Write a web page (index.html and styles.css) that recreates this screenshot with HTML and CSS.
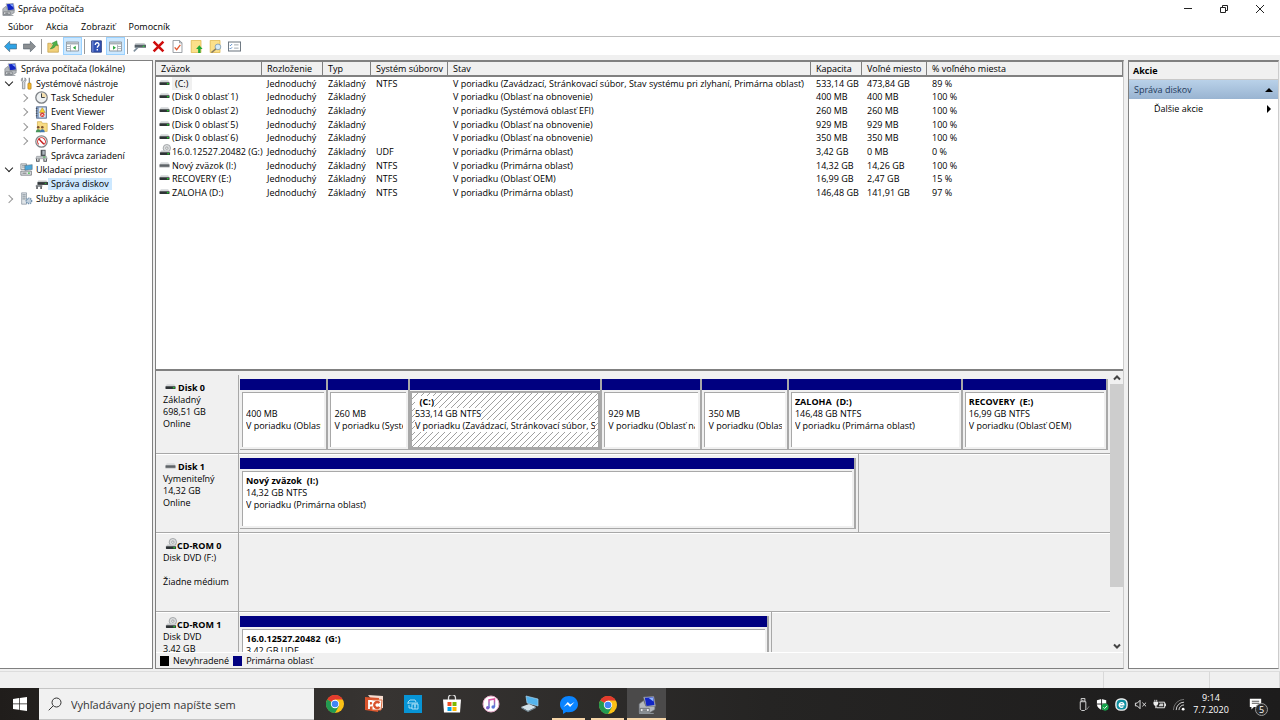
FILE: index.html
```html
<!DOCTYPE html>
<html lang="sk">

<head>
    <meta charset="UTF-8">
    <meta name="viewport" content="width=device-width, initial-scale=1.0">
    <title>Správa počítača</title>
    <link rel="stylesheet" href="styles.css">
</head>

<body>
    <!-- Shared icons -->
    <svg class="sprite" aria-hidden="true">
        <symbol id="computer" viewBox="0 0 16 16">
            <path d="M5 1l9-.5 1.500 8.500-8 1z" fill="#c9cdd6" stroke="#7d8290" stroke-width=".6" />
            <path d="M6 1.500l7.500-.5 1.200 7-7.200 1z" fill="#1226c4" />
            <path d="M9.500 1.700l3.700-.3.600 3.500z" fill="#8fb4ff" />
            <path d="M1 7l4-3 2 5h8v3l-5 3H1z" fill="#b4b8bc" stroke="#6a6e74" stroke-width=".6" />
            <path d="M2 11h8v3H2z" fill="#e6e8ea" stroke="#53585e" stroke-width=".7" />
            <path d="M4 12.500h4" stroke="#41464b" />
            <path d="M1 15.500h13" stroke="#8b9197" />
        </symbol>
        <symbol id="drive" viewBox="0 0 12 6">
            <path d="M2 0h8l1.500 2.500H.5z" fill="#d3d6d8" />
            <rect x=".5" y="2.200" width="11" height="3" rx=".5" fill="#2e3336" />
            <rect x="8.600" y="3" width="2" height="1.500" fill="#22c32c" />
        </symbol>
        <symbol id="drive-off" viewBox="0 0 12 6">
            <path d="M2 0h8l1.500 2.500H.5z" fill="#d9dbdd" />
            <rect x=".5" y="2.200" width="11" height="3" rx=".5" fill="#5f6468" />
            <path d="M.5 5.500h11" stroke="#c9cbcc" />
        </symbol>
        <symbol id="cdrom" viewBox="0 0 13 13">
            <circle cx="8.500" cy="4.500" r="4" fill="#dcdedf" stroke="#8f9395" stroke-width=".8" />
            <circle cx="8.500" cy="4.500" r="1.300" fill="#fff" stroke="#7d8183" stroke-width=".7" />
            <path d="M2.500 7h8l1.500 2H1z" fill="#c8cbcd" />
            <rect x="1" y="9" width="11" height="3" rx=".5" fill="#2e3336" />
            <rect x="9" y="9.800" width="2" height="1.500" fill="#22c32c" />
        </symbol>
        <symbol id="tools" viewBox="0 0 16 16">
            <path d="M3 1v3l1.500 1.200L6 4V1c2 1.500 2 4 0 5v8.500H3V6C1 5 1 2.500 3 1z" fill="#d6d9dc" stroke="#70767c" stroke-width=".8" />
            <path d="M11.500 1v7" stroke="#8a9096" stroke-width="1.600" />
            <rect x="9.700" y="7.500" width="4" height="7.500" rx="1" fill="#f2b62c" stroke="#a87310" stroke-width=".7" />
        </symbol>
        <symbol id="clock" viewBox="0 0 16 16">
            <circle cx="8" cy="8" r="7" fill="#eef1f2" stroke="#7d8185" stroke-width="1.600" />
            <path d="M8 8V2a6 6 0 0 1 6 6z" fill="#f3dfae" />
            <path d="M8 3v5h4" fill="none" stroke="#3b4045" stroke-width="1.200" />
        </symbol>
        <symbol id="events" viewBox="0 0 16 16">
            <rect x="2" y="1" width="12" height="14" fill="#8fa9cc" stroke="#4d6488" />
            <rect x="5" y="2" width="8" height="12" fill="#e6edf5" />
            <path d="M9 2l3.500 6h-7z" fill="#f7d22d" stroke="#a4851a" stroke-width=".6" />
            <circle cx="9" cy="10.800" r="2.800" fill="#d9362b" />
            <path d="M7.800 9.600l2.400 2.400m0-2.400L7.800 12" stroke="#fff" stroke-width=".9" />
            <path d="M1 3h2M1 6h2M1 9h2M1 12h2" stroke="#3d3d3d" />
        </symbol>
        <symbol id="shared" viewBox="0 0 16 16">
            <path d="M3 2h5l1 2h6v10H3z" fill="#f8dc83" stroke="#c79f35" stroke-width=".7" />
            <circle cx="4" cy="9" r="1.600" fill="#7c522f" />
            <circle cx="9" cy="9" r="1.600" fill="#7c522f" />
            <path d="M1 15c0-5 6-5 6 0z" fill="#49945b" />
            <path d="M6 15c0-5 6-5 6 0z" fill="#3f78ae" />
        </symbol>
        <symbol id="perf" viewBox="0 0 16 16">
            <circle cx="8" cy="8" r="7" fill="#fff" stroke="#7f8387" stroke-width="1.500" />
            <path d="M4.500 11.500a4.800 4.800 0 1 1 7 0" fill="none" stroke="#d23131" stroke-width="1.300" />
            <path d="M4.500 4.500l6.500 7" stroke="#c81f1f" stroke-width="1.800" />
        </symbol>
        <symbol id="devices" viewBox="0 0 16 16">
            <path d="M7 1h6v8H7z" fill="#4b5055" />
            <path d="M9 2h3v5H9z" fill="#aeb7bf" />
            <path d="M2 9h12l1 3H1z" fill="#c3c7ca" stroke="#7c8185" stroke-width=".6" />
            <path d="M2 12v3h3v-3m6 0v3h3v-3" fill="none" stroke="#4c5054" stroke-width="1.300" />
            <path d="M10 10h3" stroke="#2cb535" />
        </symbol>
        <symbol id="storage" viewBox="0 0 16 16">
            <path d="M1 1h7v7H1z" fill="#dde0e2" stroke="#70767a" stroke-width=".8" />
            <path d="M2.500 3h4M2.500 5h4" stroke="#8d9397" />
            <path d="M6 3l9-1v6l-9 1z" fill="#4ba6d9" stroke="#5b6c76" stroke-width=".7" />
            <path d="M1 10h13v5H1z" fill="#e0e2e4" stroke="#63686d" stroke-width=".9" />
            <path d="M3 12.500h5" stroke="#565b60" />
            <path d="M10 12.500h2" stroke="#21b42b" stroke-width="1.500" />
        </symbol>
        <symbol id="diskmgmt" viewBox="0 0 16 16">
            <path d="M4 3h10l1.500 2H3z" fill="#c4c8ca" />
            <path d="M3 5h13v3.500H3z" fill="#33383c" />
            <path d="M12 6h2v1.200h-2z" fill="#29c133" />
            <path d="M1 8.500h8V11H1z" fill="#8c9195" />
            <path d="M2.500 10.500v3m5-3v3" stroke="#44494d" stroke-width="1.800" />
        </symbol>
        <symbol id="services" viewBox="0 0 16 16">
            <path d="M2 1h6v14H2z" fill="#dfe4e8" stroke="#7c8894" stroke-width=".8" />
            <path d="M3 3.500h4M3 6h4M3 8.500h4" stroke="#6a7680" />
            <circle cx="11" cy="11" r="3.200" fill="#dce7f1" stroke="#7191ae" stroke-width="2" stroke-dasharray="1.500 .8" />
            <circle cx="11" cy="11" r="1.300" fill="#fff" stroke="#7191ae" stroke-width=".6" />
        </symbol>
        <symbol id="arrow" viewBox="0 0 16 16">
            <path d="M.5 8L7 1.500V5h8.500v6H7v3.500z" stroke="#4b5a66" stroke-width=".7" />
        </symbol>
        <symbol id="folder-up" viewBox="0 0 16 16">
            <path d="M1 4h4l1 2h8v9H1z" fill="#f0d07a" stroke="#c0983c" stroke-width=".8" />
            <path d="M4 11c2-2 3-4 4-6L6 4l6-3 1 6-2-1c-1 3-3 4-7 5z" fill="#4fb34a" stroke="#2c8030" stroke-width=".6" />
        </symbol>
        <symbol id="pane" viewBox="0 0 16 16">
            <path d="M.5 2.500h15v11H.5z" fill="#fff" stroke="#7a848c" />
            <path d="M1 3h14v2.500H1z" fill="#a9b2b9" />
        </symbol>
        <symbol id="chrome" viewBox="0 0 18 18">
            <circle cx="9" cy="9" r="9" fill="#fbc116" />
            <path d="M9 9L1.200 4.500A9 9 0 0 1 16.800 4.500H9z" fill="#e33b2e" />
            <path d="M9 9L1.200 4.500A9 9 0 0 0 9 18l4-7z" fill="#229a52" />
            <circle cx="9" cy="9" r="4.200" fill="#fff" />
            <circle cx="9" cy="9" r="3.300" fill="#4285f4" />
        </symbol>
    </svg>

    <header class="titlebar">
        <svg class="icon"><use href="#computer" /></svg>
        <h1>Správa počítača</h1>
        <div class="window-buttons">
            <button aria-label="Minimalizovať"><svg viewBox="0 0 10 10"><path d="M1 4.500h8" /></svg></button>
            <button aria-label="Obnoviť"><svg viewBox="0 0 10 10"><path d="M1.500 3.500h5v5h-5zM3.500 3.500v-2h5v5h-2" /></svg></button>
            <button aria-label="Zavrieť"><svg viewBox="0 0 10 10"><path d="M1 1l8 8M9 1L1 9" /></svg></button>
        </div>
    </header>

    <nav class="menubar">
        <button>Súbor</button>
        <button>Akcia</button>
        <button>Zobraziť</button>
        <button>Pomocník</button>
    </nav>

    <div class="toolbar">
        <button aria-label="Späť"><svg class="icon back"><use href="#arrow" /></svg></button>
        <button aria-label="Dopredu"><svg class="icon forward"><use href="#arrow" /></svg></button>
        <span class="sep"></span>
        <button aria-label="O úroveň vyššie"><svg class="icon"><use href="#folder-up" /></svg></button>
        <button class="on" aria-label="Strom konzoly"><svg class="icon" viewBox="0 0 16 16"><use href="#pane" /><path d="M5.500 6v8M1 8h4M1 10.500h4" stroke="#9aa4ab" /><path d="M12 7v5L8.500 9.500z" fill="#27a53a" /></svg></button>
        <span class="sep"></span>
        <button aria-label="Pomocník"><svg class="icon" viewBox="0 0 16 16"><path d="M2 1h12v14H2z" fill="#3252b4" stroke="#1f347b" /><path d="M3.500 1v14" stroke="#90a6e4" /><path d="M6.500 6c0-4 5-3 4.500 0-.2 1.500-2 1.500-2 3.500M9 11v2" fill="none" stroke="#fff" stroke-width="1.700" /></svg></button>
        <button class="on" aria-label="Panel akcií"><svg class="icon" viewBox="0 0 16 16"><use href="#pane" /><path d="M10.500 6v8M11 8h4M11 10.500h4" stroke="#9aa4ab" /><path d="M5 7v5l3.500-2.500z" fill="#27a53a" /></svg></button>
        <span class="sep"></span>
        <button aria-label="Disk"><svg class="icon" viewBox="0 0 16 16"><path d="M3 4h11l2 2H2z" fill="#b9bec2" /><path d="M2 6h14v3.500H2z" fill="#566068" /><path d="M12 7h2v1.500h-2z" fill="#2fd63a" /><path d="M1 14l5-5" stroke="#80909d" stroke-width="2" /></svg></button>
        <button aria-label="Odstrániť"><svg class="icon" viewBox="0 0 16 16"><path d="M2 2l12 12M14 2L2 14" stroke="#cf0e0e" stroke-width="3.200" /></svg></button>
        <button aria-label="Vlastnosti"><svg class="icon" viewBox="0 0 16 16"><path d="M2.500.5h8l3 3v12h-11z" fill="#fff" stroke="#81888e" /><path d="M10.500.5v3h3" fill="none" stroke="#81888e" /><path d="M4.500 9l2.500 3 4.500-6" fill="none" stroke="#e2562c" stroke-width="1.600" /></svg></button>
        <button aria-label="Otvoriť"><svg class="icon" viewBox="0 0 16 16"><path d="M1.500.5h12v15h-12z" fill="#fbe08a" stroke="#dfb94f" /><path d="M11.500 6.500l4 4.500h-2.500v5h-3v-5H7.500z" fill="#21a836" /></svg></button>
        <button aria-label="Hľadať"><svg class="icon" viewBox="0 0 16 16"><path d="M1.500.5h12v15h-12z" fill="#fbe08a" stroke="#dfb94f" /><circle cx="11" cy="8.500" r="3.500" fill="#d6ebf8" stroke="#7c99ae" /><path d="M8.500 11L3 15.500" stroke="#8d8060" stroke-width="2" /></svg></button>
        <button aria-label="Nastavenia"><svg class="icon" viewBox="0 0 16 16"><path d="M.5 2.500h15v11H.5z" fill="#fff" stroke="#68737d" stroke-width="1.300" /><path d="M2 6l1 1 2-2M2 10l1 1 2-2" fill="none" stroke="#3473bd" /><path d="M7.500 6H13M7.500 10H13" stroke="#8c969e" /></svg></button>
    </div>

    <main>
        <aside class="tree">
            <ul>
                <li><svg class="icon"><use href="#computer" /></svg><span>Správa počítača (lokálne)</span></li>
                <li class="level-1"><button class="open" aria-label="Zbaliť"></button><svg class="icon"><use href="#tools" /></svg><span>Systémové nástroje</span></li>
                <li class="level-2"><button aria-label="Rozbaliť"></button><svg class="icon"><use href="#clock" /></svg><span>Task Scheduler</span></li>
                <li class="level-2"><button aria-label="Rozbaliť"></button><svg class="icon"><use href="#events" /></svg><span>Event Viewer</span></li>
                <li class="level-2"><button aria-label="Rozbaliť"></button><svg class="icon"><use href="#shared" /></svg><span>Shared Folders</span></li>
                <li class="level-2"><button aria-label="Rozbaliť"></button><svg class="icon"><use href="#perf" /></svg><span>Performance</span></li>
                <li class="level-2 leaf"><svg class="icon"><use href="#devices" /></svg><span>Správca zariadení</span></li>
                <li class="level-1"><button class="open" aria-label="Zbaliť"></button><svg class="icon"><use href="#storage" /></svg><span>Ukladací priestor</span></li>
                <li class="level-2 leaf selected"><svg class="icon"><use href="#diskmgmt" /></svg><span>Správa diskov</span></li>
                <li class="level-1"><button aria-label="Rozbaliť"></button><svg class="icon"><use href="#services" /></svg><span>Služby a aplikácie</span></li>
            </ul>
        </aside>

        <section class="content">
            <div class="volumes">
                <table>
                    <colgroup>
                        <col class="c-volume">
                        <col class="c-layout">
                        <col class="c-type">
                        <col class="c-fs">
                        <col class="c-status">
                        <col class="c-capacity">
                        <col class="c-free">
                        <col>
                    </colgroup>
                    <thead>
                        <tr><th>Zväzok</th><th>Rozloženie</th><th>Typ</th><th>Systém súborov</th><th>Stav</th><th>Kapacita</th><th>Voľné miesto</th><th>% voľného miesta</th></tr>
                    </thead>
                    <tbody>
                        <tr><td><svg class="drive"><use href="#drive" /></svg><span class="focus">(C:)</span></td><td>Jednoduchý</td><td>Základný</td><td>NTFS</td><td>V poriadku (Zavádzací, Stránkovací súbor, Stav systému pri zlyhaní, Primárna oblasť)</td><td>533,14 GB</td><td>473,84 GB</td><td>89 %</td></tr>
                        <tr><td><svg class="drive"><use href="#drive" /></svg>(Disk 0 oblasť 1)</td><td>Jednoduchý</td><td>Základný</td><td></td><td>V poriadku (Oblasť na obnovenie)</td><td>400 MB</td><td>400 MB</td><td>100 %</td></tr>
                        <tr><td><svg class="drive"><use href="#drive" /></svg>(Disk 0 oblasť 2)</td><td>Jednoduchý</td><td>Základný</td><td></td><td>V poriadku (Systémová oblasť EFI)</td><td>260 MB</td><td>260 MB</td><td>100 %</td></tr>
                        <tr><td><svg class="drive"><use href="#drive" /></svg>(Disk 0 oblasť 5)</td><td>Jednoduchý</td><td>Základný</td><td></td><td>V poriadku (Oblasť na obnovenie)</td><td>929 MB</td><td>929 MB</td><td>100 %</td></tr>
                        <tr><td><svg class="drive"><use href="#drive" /></svg>(Disk 0 oblasť 6)</td><td>Jednoduchý</td><td>Základný</td><td></td><td>V poriadku (Oblasť na obnovenie)</td><td>350 MB</td><td>350 MB</td><td>100 %</td></tr>
                        <tr><td><svg class="drive cd"><use href="#cdrom" /></svg>16.0.12527.20482 (G:)</td><td>Jednoduchý</td><td>Základný</td><td>UDF</td><td>V poriadku (Primárna oblasť)</td><td>3,42 GB</td><td>0 MB</td><td>0 %</td></tr>
                        <tr><td><svg class="drive"><use href="#drive-off" /></svg>Nový zväzok (I:)</td><td>Jednoduchý</td><td>Základný</td><td>NTFS</td><td>V poriadku (Primárna oblasť)</td><td>14,32 GB</td><td>14,26 GB</td><td>100 %</td></tr>
                        <tr><td><svg class="drive"><use href="#drive" /></svg>RECOVERY (E:)</td><td>Jednoduchý</td><td>Základný</td><td>NTFS</td><td>V poriadku (Oblasť OEM)</td><td>16,99 GB</td><td>2,47 GB</td><td>15 %</td></tr>
                        <tr><td><svg class="drive"><use href="#drive" /></svg>ZALOHA (D:)</td><td>Jednoduchý</td><td>Základný</td><td>NTFS</td><td>V poriadku (Primárna oblasť)</td><td>146,48 GB</td><td>141,91 GB</td><td>97 %</td></tr>
                    </tbody>
                </table>
            </div>

            <div class="graph">
                <div class="disks">
                    <div class="disk">
                        <div class="disk-label">
                            <h2><svg class="drive"><use href="#drive" /></svg>Disk 0</h2>
                            <p>Základný</p>
                            <p>698,51 GB</p>
                            <p>Online</p>
                        </div>
                        <div class="partitions" style="flex-grow: 100">
                            <div class="part" style="flex-grow: 88"><div class="part-box"><p>&nbsp;</p><p>400 MB</p><p>V poriadku (Oblasť na obnovenie)</p></div></div>
                            <div class="part" style="flex-grow: 81"><div class="part-box"><p>&nbsp;</p><p>260 MB</p><p>V poriadku (Systémová oblasť EFI)</p></div></div>
                            <div class="part active" style="flex-grow: 194"><div class="part-box"><p><b>&nbsp; (C:)</b></p><p><span>533,14 GB NTFS</span></p><p><span>V poriadku (Zavádzací, Stránkovací súbor, Stav systému pri zlyhaní)</span></p></div></div>
                            <div class="part" style="flex-grow: 100"><div class="part-box"><p>&nbsp;</p><p>929 MB</p><p>V poriadku (Oblasť na obnovenie)</p></div></div>
                            <div class="part" style="flex-grow: 86"><div class="part-box"><p>&nbsp;</p><p>350 MB</p><p>V poriadku (Oblasť na obnovenie)</p></div></div>
                            <div class="part" style="flex-grow: 175"><div class="part-box"><p><b>ZALOHA&nbsp; (D:)</b></p><p>146,48 GB NTFS</p><p>V poriadku (Primárna oblasť)</p></div></div>
                            <div class="part" style="flex-grow: 146"><div class="part-box"><p><b>RECOVERY&nbsp; (E:)</b></p><p>16,99 GB NTFS</p><p>V poriadku (Oblasť OEM)</p></div></div>
                        </div>
                    </div>
                    <div class="disk">
                        <div class="disk-label">
                            <h2><svg class="drive"><use href="#drive-off" /></svg>Disk 1</h2>
                            <p>Vymeniteľný</p>
                            <p>14,32 GB</p>
                            <p>Online</p>
                        </div>
                        <div class="partitions single" style="flex-grow: 71">
                            <div class="part"><div class="part-box"><p><b>Nový zväzok&nbsp; (I:)</b></p><p>14,32 GB NTFS</p><p>V poriadku (Primárna oblasť)</p></div></div>
                        </div>
                        <div class="unused" style="flex-grow: 29"></div>
                    </div>
                    <div class="disk">
                        <div class="disk-label">
                            <h2><svg class="drive cd"><use href="#cdrom" /></svg>CD-ROM 0</h2>
                            <p>Disk DVD (F:)</p>
                            <p>&nbsp;</p>
                            <p>Žiadne médium</p>
                        </div>
                    </div>
                    <div class="disk">
                        <div class="disk-label">
                            <h2><svg class="drive cd"><use href="#cdrom" /></svg>CD-ROM 1</h2>
                            <p>Disk DVD</p>
                            <p>3,42 GB</p>
                        </div>
                        <div class="partitions single" style="flex-grow: 61">
                            <div class="part"><div class="part-box"><p><b>16.0.12527.20482&nbsp; (G:)</b></p><p>3,42 GB UDF</p></div></div>
                        </div>
                        <div class="unused" style="flex-grow: 39"></div>
                    </div>
                </div>
                <div class="scrollbar">
                    <button aria-label="Nahor"><svg viewBox="0 0 8 8"><path d="M1 5.500l3-3 3 3" /></svg></button>
                    <div class="thumb"></div>
                    <button aria-label="Nadol"><svg viewBox="0 0 8 8"><path d="M1 2.500l3 3 3-3" /></svg></button>
                </div>
            </div>

            <div class="legend">
                <i class="swatch black"></i>
                <span>Nevyhradené</span>
                <i class="swatch navy"></i>
                <span>Primárna oblasť</span>
            </div>
        </section>

        <aside class="actions">
            <h2>Akcie</h2>
            <button class="group">Správa diskov<svg viewBox="0 0 8 8"><path d="M0 6l4-4 4 4z" /></svg></button>
            <button class="more">Ďalšie akcie<svg viewBox="0 0 8 8"><path d="M2 0l4 4-4 4z" /></svg></button>
        </aside>
    </main>

    <div class="statusbar"><span></span><span></span><span></span></div>

    <footer class="taskbar">
        <button class="start" aria-label="Štart"><svg viewBox="0 0 14 14"><path d="M0 2l6-.9v5.500H0zM6.700 1L14 0v6.600H6.700zM0 7.300h6v5.500L0 12zM6.700 7.300H14V14l-7.300-1z" fill="#fff" /></svg></button>
        <label class="search">
            <svg viewBox="0 0 14 14"><circle cx="8.500" cy="5.500" r="4.500" /><path d="M5.200 8.800L.7 13.300" /></svg>
            <input type="text" aria-label="Vyhľadávanie" placeholder="Vyhľadávaný pojem napíšte sem">
        </label>
        <div class="apps">
            <button aria-label="Chrome"><svg viewBox="0 0 18 18"><use href="#chrome" /></svg></button>
            <button aria-label="PowerPoint"><svg viewBox="0 0 18 18"><path d="M3 0l15 1v12l-4 1z" fill="#f6dccf" /><path d="M0 2l14 1-1 14-13-2z" fill="#d9532c" /><path d="M7 5h10l-1 10H7z" fill="#fff" stroke="#e06b3e" /><path d="M4 14V6h2a2 2 0 0 1 0 4.500H4" fill="none" stroke="#fff" stroke-width="1.800" /><path d="M14.500 8a3 3 0 1 0 0 4" fill="none" stroke="#d9532c" stroke-width="2.400" /></svg></button>
            <button aria-label="Skener"><svg viewBox="0 0 18 18"><path d="M0 0h18v18H0z" fill="#0794d5" /><path d="M4 9V7l2-2h5l1 2M4 8h10M5 10v3h3M8 9h6v5H8zM10 11h2M11 9v5" fill="none" stroke="#b9e5f8" stroke-width=".9" /></svg></button>
            <button aria-label="Store"><svg viewBox="0 0 18 18"><path d="M5.500 5V3a3.500 3.500 0 0 1 7 0v2" fill="none" stroke="#ddd" stroke-width="1.300" /><path d="M0 4.500h18l-1 13H1z" fill="#fff" /><path d="M4.500 7H8.500v4h-4z" fill="#f04e23" /><path d="M9.500 7h4v4h-4z" fill="#7db900" /><path d="M4.500 12h4v4h-4z" fill="#00a2ec" /><path d="M9.500 12h4v4h-4z" fill="#fdb800" /></svg></button>
            <button aria-label="iTunes"><svg viewBox="0 0 18 18"><linearGradient id="tune" x1="0" y1="0" x2="0" y2="1"><stop offset="0" stop-color="#e2509b" /><stop offset="1" stop-color="#3d8de4" /></linearGradient><circle cx="9" cy="9" r="8" fill="#fff" stroke="#e5a9c8" /><path d="M7 13V5l5.500-1v8" fill="none" stroke="url(#tune)" stroke-width="1.500" /><circle cx="5.800" cy="12.800" r="1.800" fill="#7e62ce" /><circle cx="11.200" cy="12" r="1.800" fill="#5c76d8" /></svg></button>
            <button aria-label="Tento počítač"><svg viewBox="0 0 18 18"><path d="M5 1l12 3v7L6 8z" fill="#54b4ed" stroke="#a7d3ee" stroke-width=".7" /><path d="M0 12l8-3 7 3-8 4z" fill="#d2e0e8" /><path d="M0 12l7 4 8-4v1l-8 4-7-4z" fill="#7b929f" /></svg></button>
            <button class="running" aria-label="Messenger"><svg viewBox="0 0 18 18"><path d="M9 0c5 0 9 3.500 9 8.300 0 4.500-4 8-9 8-1 0-2 0-2.800-.4L3 18v-3.500C1 13 0 11 0 8.300 0 3.500 4 0 9 0z" fill="#0a84ff" /><path d="M3.500 11L7.800 6l2.600 2.400L14.500 6l-4.400 5-2.500-2.400z" fill="#fff" /></svg></button>
            <button class="running" aria-label="Chrome"><svg viewBox="0 0 18 18"><use href="#chrome" /></svg></button>
            <button class="running current" aria-label="Správa počítača"><svg viewBox="0 0 16 16"><use href="#computer" /></svg></button>
        </div>
        <div class="tray">
            <button aria-label="USB"><svg viewBox="0 0 14 14"><path d="M4.500 4V.5h4V4M3.500 4h6v8l-1.500 1.500H5L3.500 12zM6 2v1M7.500 2v1" fill="none" stroke="#ddd" /><path d="M9 11l1.500 1.500L13 9" fill="none" stroke="#888" /></svg></button>
            <button aria-label="Zabezpečenie"><svg viewBox="0 0 14 14"><path d="M6 1l5 1.500V7c0 3-2.500 4.500-5 6-2.500-1.500-5-3-5-6V2.500z" fill="#fff" /><path d="M6 1v12M1 6.500h10" stroke="#222" /><circle cx="9.800" cy="9.800" r="3.800" fill="#16a34a" /><path d="M8 10l1.300 1.300L12 8.500" fill="none" stroke="#fff" /></svg></button>
            <button aria-label="ESET"><svg viewBox="0 0 14 14"><rect x="1" y="1" width="12" height="12" rx="5" fill="#0e8fa0" stroke="#f2f2f2" stroke-width="1.500" /><path d="M4.500 7.200h5A2.500 2.500 0 1 0 9 9" fill="none" stroke="#fff" stroke-width="1.500" /></svg></button>
            <button aria-label="Hlasitosť"><svg viewBox="0 0 14 14"><path d="M1.500 5.500h2l3-3v9l-3-3h-2zM9 5l4 4M13 5L9 9" fill="none" stroke="#eee" /></svg></button>
            <button aria-label="Batéria"><svg viewBox="0 0 14 14"><path d="M6 4.500h6.500v6H4V9" fill="none" stroke="#eee" /><path d="M13 6h1v3h-1z" fill="#eee" /><path d="M7.500 6h3.500v3H6z" fill="#ccc" /><path d="M.5 4h5v2a2.500 2.500 0 0 1-5 0z" fill="#eee" /><path d="M2 2v2M4 2v2M3 8v3" stroke="#eee" /></svg></button>
            <button aria-label="Sieť"><svg viewBox="0 0 14 14"><path d="M1.500 13A11.500 11.500 0 0 1 13 1.500" fill="none" stroke="#777" /><path d="M4.500 13A8.500 8.500 0 0 1 13 4.500M7.500 13A5.500 5.500 0 0 1 13 7.500" fill="none" stroke="#ddd" /><circle cx="12" cy="12" r="1.500" fill="#fff" /></svg></button>
            <button class="clock"><span>9:14</span><span>7.7.2020</span></button>
            <button class="notify" aria-label="Oznámenia"><svg viewBox="0 0 16 14"><path d="M1 0h14v10H6l-3 3v-3H1z" fill="#fff" /><path d="M3.500 3h9M3.500 5.500h9" stroke="#333" /></svg><span class="badge">5</span></button>
        </div>
    </footer>
</body>

</html>
```
FILE: styles.css
```css
:root {
    --face: #f0f0f0;
    --shadow: #a8a8a8;
    --dark: #808080;
    --navy: #000080;
}

* {
    box-sizing: border-box;
}

body {
    display: flex;
    flex-direction: column;
    height: 100vh;
    margin: 0;
    overflow: hidden;
    background-color: var(--face);
    color: #000;
    font-family: "Open Sans", "Noto Sans", sans-serif;
    font-size: 9px;
    line-height: 12px;
    white-space: nowrap;
}

button {
    padding: 0;
    border: 0;
    background: none;
    color: inherit;
    font: inherit;
}

h1,
h2,
p,
ul {
    margin: 0;
    padding: 0;
    font-size: inherit;
}

svg {
    display: block;
    flex: none;
}

.sprite {
    position: absolute;
    width: 0;
    height: 0;
}

.icon {
    width: 13px;
    height: 13px;
}

/* Title, menu and toolbar */
.titlebar {
    display: flex;
    align-items: center;
    flex: none;
    gap: 3px;
    height: 18px;
    padding: 0 2px;
    background-color: #fff;
}

.titlebar h1 {
    font-weight: normal;
}

.window-buttons {
    display: flex;
    margin-left: auto;
}

.window-buttons button {
    display: grid;
    place-items: center;
    width: 36px;
    height: 18px;
}

.window-buttons svg {
    width: 10px;
    height: 10px;
    fill: none;
    stroke: #222;
}

.menubar {
    display: flex;
    flex: none;
    gap: 13px;
    height: 19px;
    padding-left: 8px;
    border-bottom: 1px solid #bdbdbd;
    background-color: #fff;
}

.toolbar {
    display: flex;
    align-items: center;
    flex: none;
    height: 18px;
    padding-left: 1px;
    background-color: #fff;
}

.toolbar button {
    display: grid;
    place-items: center;
    width: 19px;
    height: 18px;
}

.toolbar .on {
    border: 1px solid #99d1ff;
    background-color: #cce8ff;
}

.toolbar .sep {
    width: 1px;
    height: 15px;
    margin: 0 2px;
    background-color: #999;
}

.back {
    fill: #2fa3e6;
}

.forward {
    fill: #8b8f92;
    transform: scaleX(-1);
}

/* Three panes */
main {
    display: flex;
    flex: 1;
    min-height: 0;
    padding: 5px 1px 0 0;
}

.tree {
    flex: none;
    width: 153px;
    border: 1px solid var(--dark);
    border-left: 0;
    background-color: #fff;
}

.tree ul {
    display: grid;
    grid-auto-rows: 1fr;
    height: 144px;
    margin-top: 1px;
    list-style: none;
}

.tree li {
    display: flex;
    align-items: center;
    padding-left: 4px;
}

.tree li span {
    padding: 0 4px;
}

.tree .level-1 {
    padding-left: 4px;
}

.tree .level-2 {
    padding-left: 19px;
}

.tree .leaf {
    padding-left: 35px;
}

.tree .level-1 span,
.tree .level-2 span {
    padding: 0 3px;
}

.tree .selected span {
    background-color: #cce8ff;
}

.tree button {
    display: grid;
    place-items: center;
    width: 10px;
    height: 12px;
    margin-right: 6px;
}

.tree button::before {
    content: "";
    width: 5px;
    height: 5px;
    border: solid #999;
    border-width: 1px 1px 0 0;
    transform: rotate(45deg);
}

.tree button.open {
    padding-bottom: 4px;
}

.tree button.open::before {
    border-color: #222;
    transform: rotate(135deg);
}

.content {
    display: flex;
    flex: 1;
    flex-direction: column;
    min-width: 0;
    margin-left: 2px;
    border: 1px solid var(--dark);
    border-top-width: 2px;
    border-right-color: #ccc;
}

.volumes {
    flex: none;
    height: 307px;
    background-color: #fff;
}

table {
    width: 100%;
    height: 138px;
    border-spacing: 0;
    table-layout: fixed;
}

th,
td {
    padding: 0 0 0 5px;
    text-align: left;
    vertical-align: middle;
}

th {
    height: 15px;
    border-right: 1px solid var(--dark);
    border-bottom: 2px solid var(--dark);
    background-color: var(--face);
    font-weight: normal;
}

td:first-child {
    padding-left: 3px;
}

.c-volume {
    width: 106px;
}

.c-layout {
    width: 61px;
}

.c-type {
    width: 48px;
}

.c-fs {
    width: 77px;
}

.c-status {
    width: 363px;
}

.c-capacity {
    width: 51px;
}

.c-free {
    width: 65px;
}

.drive {
    display: inline-block;
    width: 11px;
    height: 6px;
    margin-right: 2px;
    vertical-align: 1px;
}

.drive.cd {
    width: 12px;
    height: 12px;
    margin: -2px 1px -1px 0;
    vertical-align: 0;
}

.focus {
    padding: 0 4px 0 3px;
    background-color: #f0f0f0;
}

/* Disk map */
.graph {
    display: flex;
    flex: 1;
    min-height: 0;
    border-top: 2px solid var(--dark);
}

.disks {
    flex: 1;
    min-width: 0;
    overflow: hidden;
    padding-top: 4px;
}

.disk {
    display: flex;
    height: 79px;
    border-bottom: 1px solid var(--shadow);
    box-shadow: 0 1px #fff;
}

.disk-label {
    flex: none;
    width: 83px;
    padding: 7px 0 0 7px;
    border-right: 1px solid var(--shadow);
}

.disk-label .drive {
    margin-left: 2px;
}

.disk-label .drive.cd {
    margin-right: 0;
}

.partitions {
    display: flex;
    flex: 1 1 0;
    min-width: 0;
    padding: 4px 2px 3px 1px;
}

.unused {
    flex: 1 1 0;
}

.single {
    border-right: 1px solid var(--shadow);
}

.part {
    display: flex;
    flex: 1 1 0;
    flex-direction: column;
    min-width: 0;
    border-right: 2px solid var(--shadow);
    border-bottom: 1px solid var(--shadow);
}

.part::before {
    content: "";
    height: 11px;
    background-color: var(--navy);
}

.part-box {
    flex: 1;
    overflow: hidden;
    margin: 2px;
    padding: 3px;
    border: solid var(--shadow);
    border-width: 1px 0 0 1px;
    background-color: #fff;
}

.part-box p {
    overflow: hidden;
}

.active .part-box {
    margin: 1px 0 0;
    border-width: 2px;
    background-image: linear-gradient(135deg, transparent 43%, #a0a0a0 43%, #a0a0a0 57%, transparent 57%);
    background-size: 6px 6px;
}

.active b,
.active span {
    background-color: #fff;
}

.scrollbar {
    display: flex;
    flex: none;
    flex-direction: column;
    justify-content: space-between;
    width: 13px;
}

.scrollbar button {
    display: grid;
    place-items: center;
    height: 13px;
}

.scrollbar svg {
    width: 8px;
    height: 8px;
    fill: none;
    stroke: #444;
    stroke-width: 2;
}

.thumb {
    height: 203px;
    margin-bottom: auto;
    background-color: #cdcdcd;
}

.legend {
    display: flex;
    align-items: center;
    flex: none;
    gap: 4px;
    height: 16px;
    padding-left: 4px;
    border-top: 1px solid #fff;
}

.swatch {
    width: 9px;
    height: 10px;
}

.black {
    background-color: #000;
}

.navy {
    background-color: var(--navy);
}

.actions {
    flex: none;
    width: 151px;
    margin-left: 4px;
    border: 1px solid var(--dark);
    border-top-width: 2px;
    border-right-color: #ccc;
    background-color: #fff;
}

.actions h2 {
    height: 18px;
    padding: 3px 4px;
    border-bottom: 1px solid #c8c8c8;
    background-color: var(--face);
}

.actions button {
    display: flex;
    align-items: center;
    justify-content: space-between;
    width: 100%;
    height: 19px;
    padding: 0 5px;
}

.actions .group {
    background-image: linear-gradient(#b9d1e9, #99b4d1);
    color: #1e395b;
}

.actions .more {
    padding-left: 25px;
}

.actions svg {
    width: 8px;
    height: 8px;
    fill: #000;
}

.statusbar {
    display: flex;
    flex: none;
    height: 19px;
    padding-top: 2px;
}

.statusbar span {
    width: 70px;
    border-top: 1px solid #ddd;
    border-right: 1px solid #d9d9d9;
}

.statusbar span:first-child {
    flex: 1;
}

.statusbar span:nth-child(2) {
    width: 106px;
}

/* Taskbar */
.taskbar {
    display: flex;
    flex: none;
    height: 32px;
    background-image: linear-gradient(90deg, #201d1b, #373432 30%, #252423 60%, #1d1c1c);
    color: #fff;
}

.taskbar button {
    display: grid;
    place-items: center;
}

.start {
    width: 39px;
}

.start svg {
    width: 14px;
    height: 14px;
}

.search {
    display: flex;
    align-items: center;
    width: 275px;
    padding-left: 9px;
    border: solid #c4c4c4;
    border-width: 1px 0;
    background-color: #f1f1f1;
}

.search svg {
    width: 14px;
    height: 14px;
    fill: none;
    stroke: #333;
    stroke-width: 1;
}

.search input {
    flex: 1;
    min-width: 0;
    margin-left: 9px;
    padding: 0;
    border: 0;
    background: none;
    color: #333;
    font: 11px "Open Sans", "Noto Sans", sans-serif;
}

.search input::placeholder {
    color: #333;
}

.apps {
    display: flex;
    margin-left: 1px;
}

.apps button {
    width: 39px;
    border: solid transparent;
    border-width: 2px 0;
}

.apps svg {
    width: 18px;
    height: 18px;
}

.apps .running {
    border-width: 0;
    padding-top: 2px;
    background: linear-gradient(#f6d5a8, #f6d5a8) center bottom / 33px 2px no-repeat;
}

.apps .running::after {
    content: none;
}

.apps .current {
    background: linear-gradient(#4b4a4a, #4b4a4a) center top / 39px 30px no-repeat #f6d5a8;
}

.tray {
    display: flex;
    margin-left: auto;
}

.tray button {
    width: 19px;
}

.tray svg {
    width: 13px;
    height: 13px;
}

.tray .clock {
    align-content: center;
    width: 46px;
}

.tray .notify {
    position: relative;
    width: 42px;
    margin-right: 4px;
}

.badge {
    position: absolute;
    top: 15px;
    left: 21px;
    width: 13px;
    height: 13px;
    border: 1px solid #999;
    border-radius: 50%;
    background-color: #2b2b2b;
    line-height: 11px;
    text-align: center;
}
```
